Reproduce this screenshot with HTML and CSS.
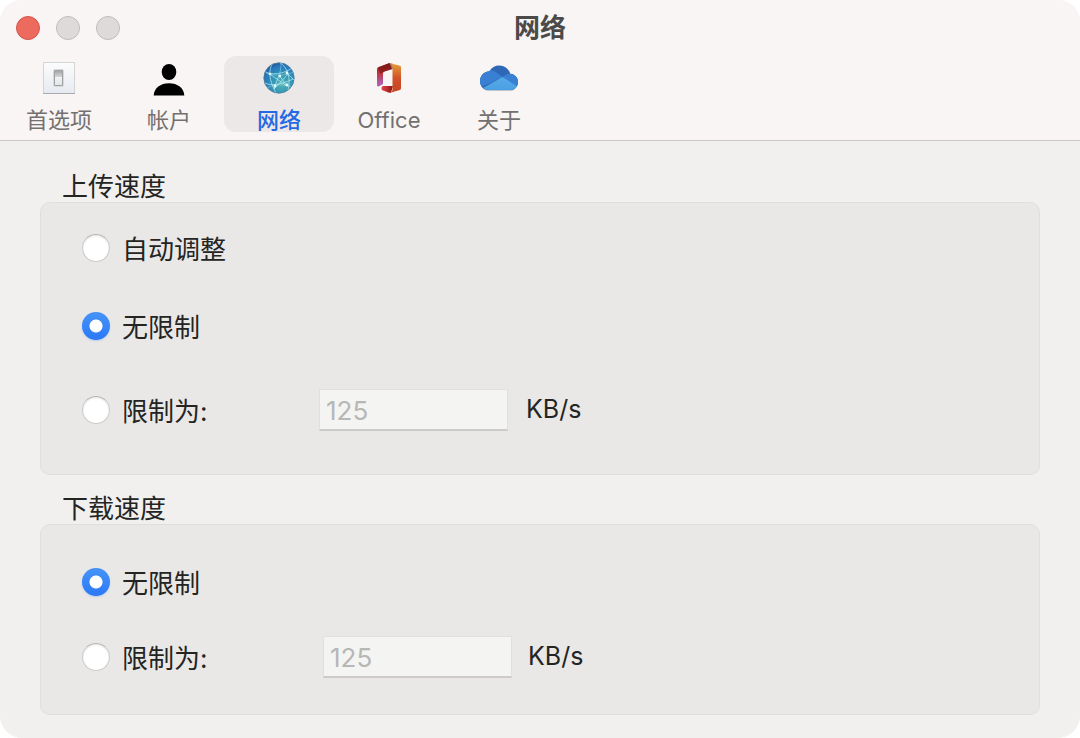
FILE: index.html
```html
<!DOCTYPE html>
<html lang="zh-CN">
<head>
<meta charset="UTF-8">
<meta name="viewport" content="width=device-width, initial-scale=1.0">
<title>网络</title>
<link rel="stylesheet" href="styles.css">
</head>
<body>
<div class="window">
    <header class="header">
        <div class="titlebar">
            <div class="lights">
                <button class="light close" type="button" aria-label="关闭"></button>
                <button class="light" type="button" aria-label="最小化" disabled></button>
                <button class="light" type="button" aria-label="缩放" disabled></button>
            </div>
            <h1 class="title">网络</h1>
        </div>
        <nav class="toolbar">
            <button class="tab" type="button">
                <svg class="icon" viewBox="0 0 40 34" aria-hidden="true">
                    <defs>
                        <linearGradient id="plate" x1="0" y1="0" x2="0" y2="1">
                            <stop offset="0" stop-color="#fcfcfc"/>
                            <stop offset="1" stop-color="#e6eaf0"/>
                        </linearGradient>
                        <linearGradient id="lever" x1="0" y1="0" x2="0" y2="1">
                            <stop offset="0" stop-color="#a4a4a4"/>
                            <stop offset="0.4" stop-color="#d2d2d2"/>
                            <stop offset="0.41" stop-color="#f4f4f4"/>
                            <stop offset="1" stop-color="#e2e4e6"/>
                        </linearGradient>
                    </defs>
                    <rect x="4.5" y="1.5" width="31" height="31" fill="url(#plate)" stroke="#d3d4d6"/>
                    <path d="M4 32.5h32" stroke="#a9abae"/>
                    <rect x="14.5" y="8.5" width="10" height="17" rx="1.5" fill="#c6c7c9" stroke="#d9dadb"/>
                    <rect x="15.5" y="9.5" width="8" height="15" rx="0.5" fill="url(#lever)" stroke="#a0a1a3"/>
                </svg>
                <span>首选项</span>
            </button>
            <button class="tab" type="button">
                <svg class="icon" viewBox="0 0 40 34" aria-hidden="true">
                    <ellipse cx="20" cy="11" rx="7.3" ry="8"/>
                    <path d="M4.7 34.6C5 27 11.5 22.3 20 22.3S35 27 35.3 34.6z"/>
                </svg>
                <span>帐户</span>
            </button>
            <button class="tab active" type="button" aria-current="page">
                <svg class="icon" viewBox="0 0 40 34" aria-hidden="true">
                    <defs>
                        <radialGradient id="globe" cx="0.6" cy="0.7" r="0.7">
                            <stop offset="0" stop-color="#4fb3b4"/>
                            <stop offset="0.5" stop-color="#3293b5"/>
                            <stop offset="0.85" stop-color="#2678bd"/>
                            <stop offset="1" stop-color="#1f5c9c"/>
                        </radialGradient>
                        <clipPath id="disc"><circle cx="20" cy="17" r="15"/></clipPath>
                    </defs>
                    <circle cx="20" cy="17" r="15.2" fill="url(#globe)" stroke="#52809b" stroke-width="0.8"/>
                    <g clip-path="url(#disc)" fill="none" stroke="#b9f0f5" stroke-width="1" stroke-opacity="0.7">
                        <path d="M5 10C12 15 25 13 33 7"/>
                        <path d="M7 12C14 15 26 15 35 11" stroke-opacity="0.4"/>
                        <path d="M14 2C9 8 10 20 17 32"/>
                        <path d="M20 1C29 6 32 18 29 29"/>
                        <path d="M22 2C22 7 21 11 20 18" stroke-opacity="0.4"/>
                        <path d="M6 22C13 26 26 22 34 18"/>
                        <path d="M12 14L28 25L20 14L15 28L29 13"/>
                        <path d="M8 27C17 22 25 24 33 26" stroke-opacity="0.4"/>
                        <path d="M28 12L35 19"/>
                    </g>
                    <g fill="#e9ffff">
                        <circle cx="11" cy="13" r="1.3"/>
                        <circle cx="21" cy="15" r="1.2"/>
                        <circle cx="28" cy="12" r="1.4"/>
                        <circle cx="16" cy="25" r="1.4"/>
                        <circle cx="28" cy="24" r="1.4"/>
                    </g>
                </svg>
                <span>网络</span>
            </button>
            <button class="tab" type="button">
                <svg class="icon" viewBox="0 0 40 34" aria-hidden="true">
                    <defs>
                        <linearGradient id="office-left" x1="0" y1="0" x2="0" y2="1">
                            <stop offset="0" stop-color="#8f1d1c"/>
                            <stop offset="0.45" stop-color="#c0363b"/>
                            <stop offset="0.8" stop-color="#b3589f"/>
                            <stop offset="1" stop-color="#b25fbc"/>
                        </linearGradient>
                        <linearGradient id="office-right" x1="0" y1="0" x2="0" y2="1">
                            <stop offset="0.05" stop-color="#e59a36"/>
                            <stop offset="0.5" stop-color="#d0502a"/>
                            <stop offset="1" stop-color="#c6451f"/>
                        </linearGradient>
                        <linearGradient id="office-bottom" x1="0" y1="0" x2="1" y2="0">
                            <stop offset="0" stop-color="#e5434b"/>
                            <stop offset="1" stop-color="#8a1413"/>
                        </linearGradient>
                    </defs>
                    <path d="M8 8.3Q8 7 9.2 6.3L20.5 2L23 8L15.5 10.6Q14 11.2 14 12.7V23L10.2 25.2Q8 26 8 23.8z" fill="url(#office-left)"/>
                    <path d="M9.2 6.3L20.5 2L24 3V8L15.5 10.6Q13 11.5 11.5 13z" fill="#6f1211" opacity="0.55"/>
                    <path d="M12.8 29Q11.8 25 14.5 25H24L22 31.7H20z" fill="url(#office-bottom)"/>
                    <path d="M20.5 2L31 4.7Q32 5 32 6.5V27Q32 28.8 30.8 29.1L20.5 32Q23.5 31 23.5 28V6.3Q23.5 3 20.5 2z" fill="url(#office-right)"/>
                </svg>
                <span>Office</span>
            </button>
            <button class="tab" type="button">
                <svg class="icon" viewBox="0 0 40 34" aria-hidden="true">
                    <defs>
                        <clipPath id="cloud">
                            <path d="M9.4 29C4.2 29 1 25 1 20C1 14.8 5 10.5 10.4 10.2C12.5 6.5 16 4.5 20.2 4.5C25.5 4.5 30 8 31.3 12.8C35.7 13.3 39 16.5 39 21C39 25.7 35.6 29 31 29z"/>
                        </clipPath>
                        <linearGradient id="cloud-low" x1="0" y1="0" x2="0" y2="1">
                            <stop offset="0" stop-color="#55abe8"/>
                            <stop offset="1" stop-color="#459be0"/>
                        </linearGradient>
                    </defs>
                    <path d="M3 26Q5 30 10 30H31Q36 30 38 25z" fill="#bdc3ca"/>
                    <g clip-path="url(#cloud)">
                        <rect width="40" height="34" fill="#2d67b5"/>
                        <path d="M0 9H10Q15 9 18 12L24 16L0 27z" fill="#397fd3"/>
                        <path d="M23.5 16Q28 12 33 12H40V28z" fill="#397fd3"/>
                        <path d="M4 27L23.5 16L39 26V34H4z" fill="url(#cloud-low)"/>
                    </g>
                </svg>
                <span>关于</span>
            </button>
        </nav>
    </header>

    <main class="content">
        <fieldset class="section">
            <legend class="legend">上传速度</legend>
            <div class="group upload">
                <div class="row">
                    <label class="option"><input class="radio" type="radio" name="upload">自动调整</label>
                </div>
                <div class="row">
                    <label class="option"><input class="radio" type="radio" name="upload" checked>无限制</label>
                </div>
                <div class="row limit">
                    <label class="option"><input class="radio" type="radio" name="upload">限制为:</label>
                    <input class="rate" id="upload-rate" type="text" value="125" disabled>
                    <label class="unit" for="upload-rate">KB/s</label>
                </div>
            </div>
        </fieldset>

        <fieldset class="section">
            <legend class="legend">下载速度</legend>
            <div class="group download">
                <div class="row">
                    <label class="option"><input class="radio" type="radio" name="download" checked>无限制</label>
                </div>
                <div class="row limit">
                    <label class="option"><input class="radio" type="radio" name="download">限制为:</label>
                    <input class="rate" id="download-rate" type="text" value="125" disabled>
                    <label class="unit" for="download-rate">KB/s</label>
                </div>
            </div>
        </fieldset>
    </main>
</div>
</body>
</html>
```

FILE: styles.css
```css
* {
    box-sizing: border-box;
}

body {
    margin: 0;
    background: #fff;
    color: #242423;
    font-family: Inter, "Noto Sans CJK SC", sans-serif;
    font-size: 26px;
    line-height: 30px;
}

button,
input {
    margin: 0;
    font-family: inherit;
}

.window {
    min-height: 100vh;
    border-radius: 22px;
    overflow: hidden;
    background: #f1f0ee;
}

/* Title bar and toolbar */
.header {
    background: #f8f5f4;
    border-bottom: 1px solid #cbc9c8;
}

.titlebar {
    display: grid;
    grid-template-columns: 1fr auto 1fr;
    align-items: center;
    height: 56px;
    padding: 0 16px;
}

.lights {
    display: flex;
    gap: 16px;
}

.light {
    width: 24px;
    height: 24px;
    padding: 0;
    border: 1px solid #bfbcbb;
    border-radius: 50%;
    background: #dddad9;
}

.light.close {
    border-color: #d3564c;
    background: #ed6a5f;
}

.title {
    margin: 0;
    color: #4b4a49;
    font-size: 26px;
    font-weight: 700;
}

.toolbar {
    display: flex;
    padding: 0 4px 8px;
}

.tab {
    display: flex;
    flex-direction: column;
    align-items: center;
    gap: 13px;
    width: 110px;
    height: 76px;
    padding: 5px 0 0;
    border: none;
    border-radius: 12px;
    background: none;
    color: #737170;
    font-size: 22px;
    line-height: 24px;
}

.tab.active {
    background: #ebe8e7;
    color: #2468e4;
    font-weight: 500;
}

.icon {
    width: 40px;
    height: 34px;
    overflow: visible;
}

/* Speed settings */
.content {
    display: flex;
    flex-direction: column;
    gap: 16px;
    padding: 28px 40px 22px;
}

.section {
    min-width: 0;
    margin: 0;
    padding: 0;
    border: none;
}

.legend {
    padding: 3px 22px 0;
}

.group {
    display: flex;
    flex-direction: column;
    border: 1px solid #dfdedc;
    border-radius: 10px;
    background: #e9e8e6;
}

.upload {
    gap: 36px;
    padding: 24px 40px 43px;
}

.upload .limit {
    margin-top: 6px;
}

.download {
    gap: 33px;
    padding: 36px 40px;
}

.row {
    display: flex;
    align-items: center;
    height: 42px;
}

.option {
    display: flex;
    align-items: center;
    gap: 12px;
    padding: 3px 0 0 1px;
}

.limit .option {
    width: 238px;
}

.download .option {
    width: 242px;
}

/* bottom margin keeps the dot level with the text */
.radio {
    appearance: none;
    width: 28px;
    height: 28px;
    margin-bottom: 3px;
    border: 1px solid #cccbc9;
    border-top-color: #b9b8b6;
    border-radius: 50%;
    background: #fff;
    box-shadow: inset 0 1px 2px #e4e4e4;
}

.radio:checked {
    border: none;
    background: radial-gradient(circle, #fff 6px, transparent 7px), linear-gradient(#4593f8, #2b79f6);
    box-shadow: 0 1px 2px #b9cdee;
}

.rate {
    width: 189px;
    height: 42px;
    padding: 2px 6px 0;
    border: 1px solid #e1e0de;
    border-bottom: 2px solid #cccbc9;
    background: #f4f4f3;
    color: #b7b7b6;
    font-size: 26px;
}

.unit {
    padding: 0 0 2px 18px;
    font-size: 25px;
}

.download .unit {
    padding-left: 16px;
}
```
